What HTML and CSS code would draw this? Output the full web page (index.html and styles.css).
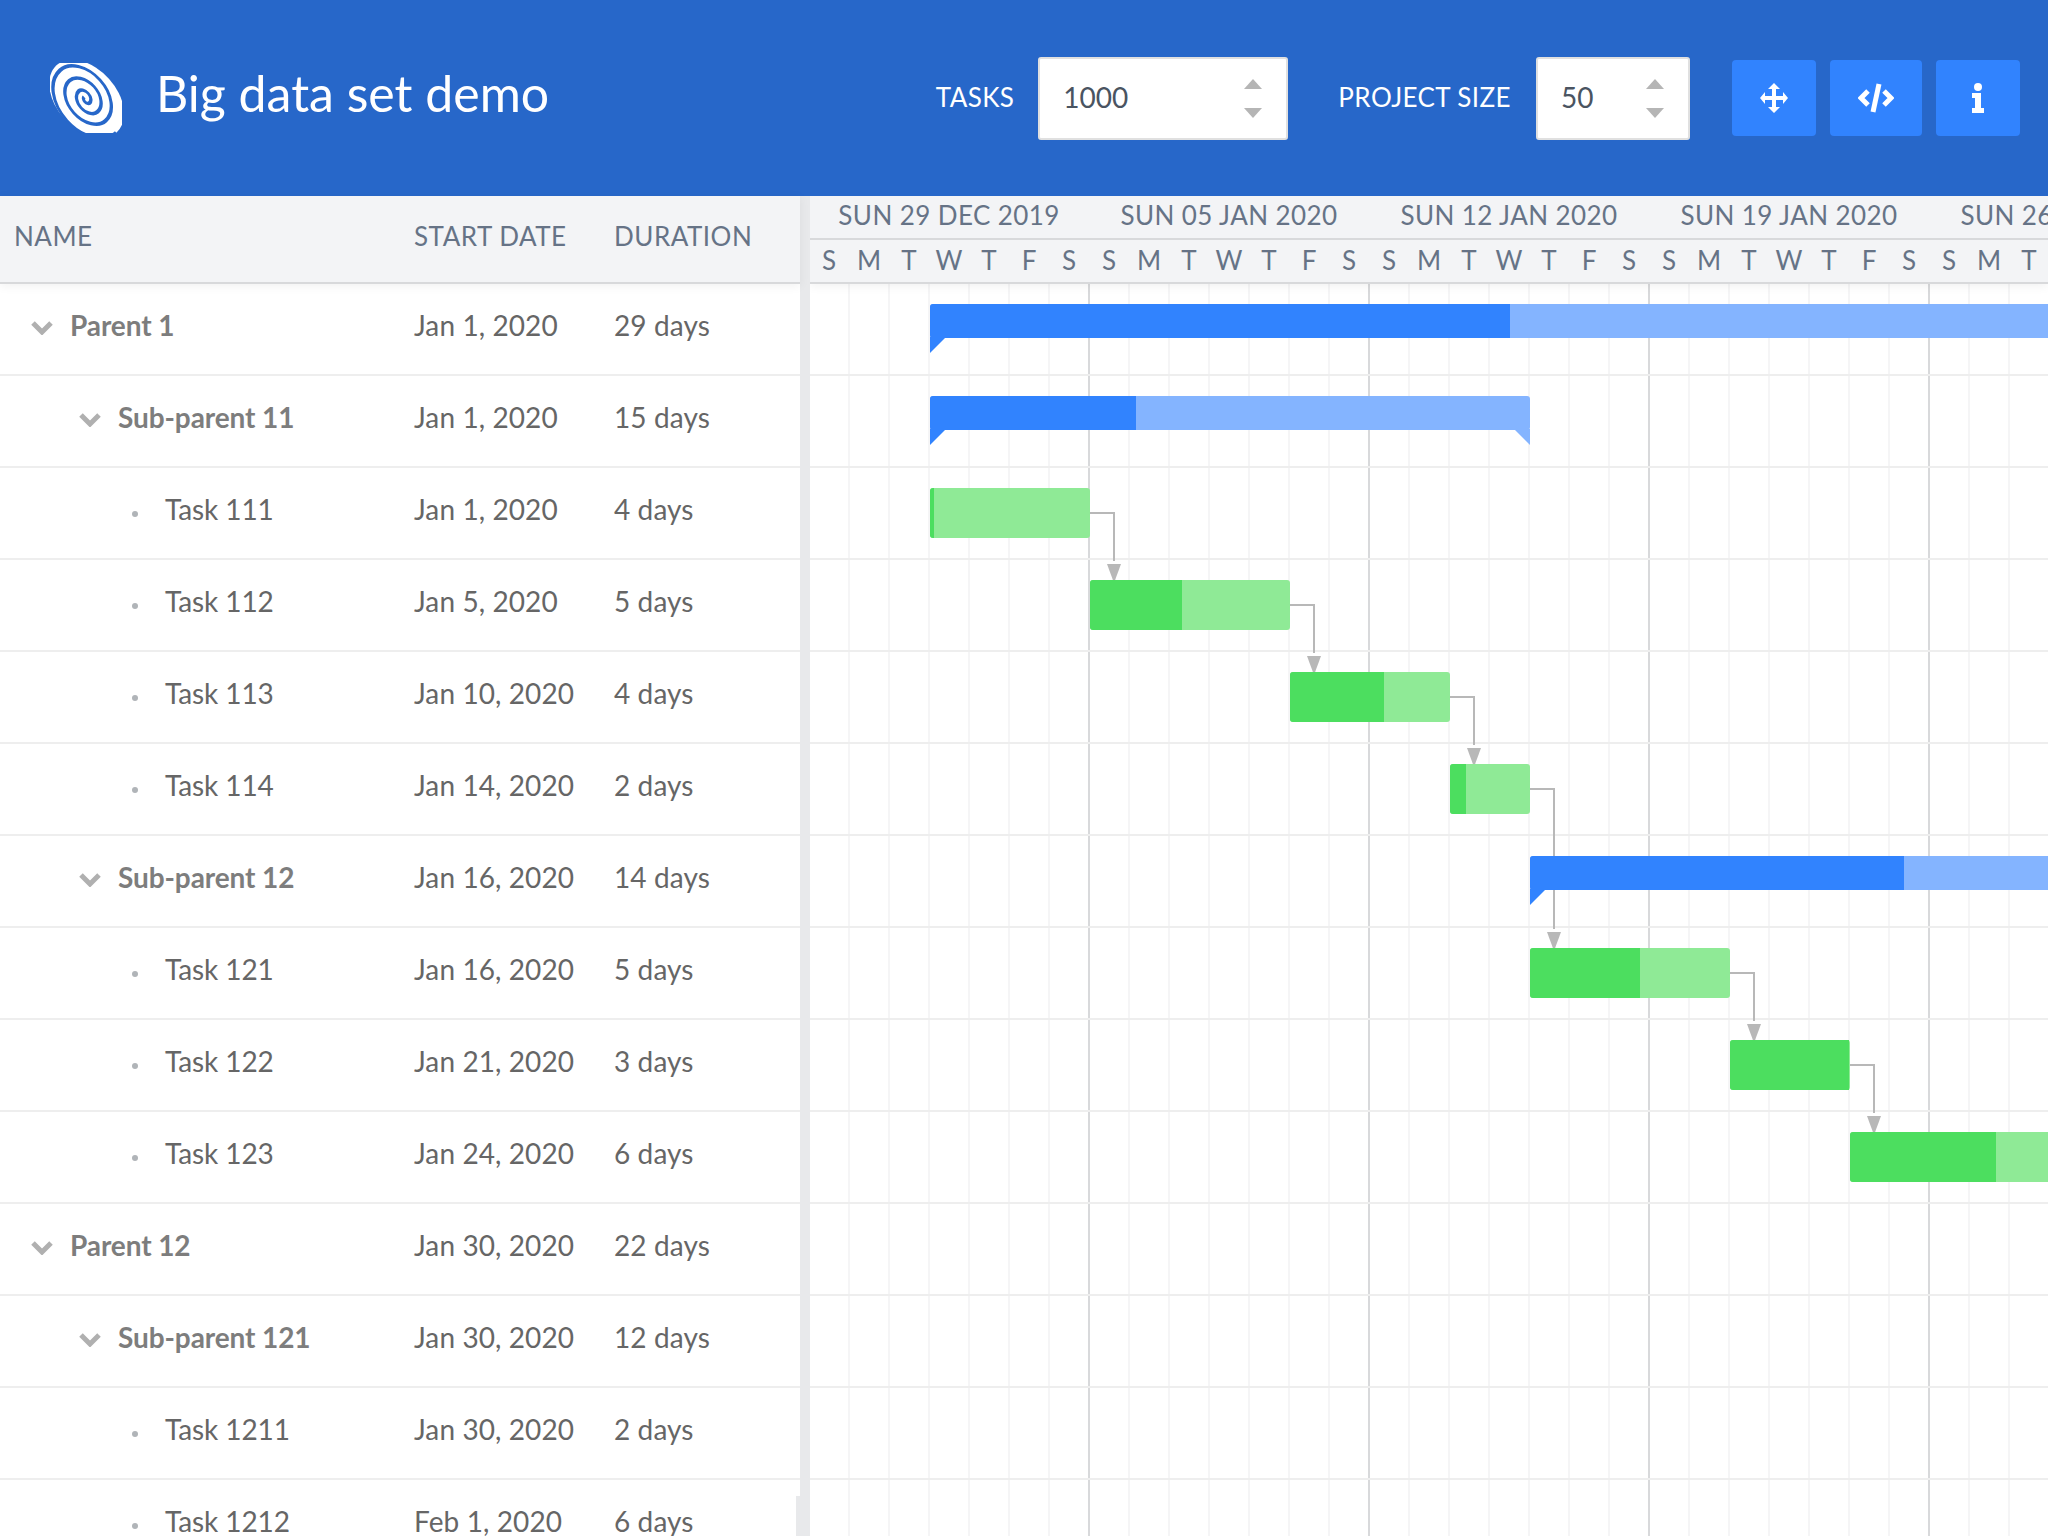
FILE: index.html
```html
<!DOCTYPE html>
<html>
  <head>
    <meta charset="utf-8" />
    <title>Big data set demo</title>
    <link rel="stylesheet" href="styles.css">
  </head>
  <body>
    <header class="topbar">
      <svg class="logo" width="72" height="70" viewBox="0 0 72 70">
        <defs>
          <linearGradient id="logofill" gradientUnits="userSpaceOnUse" x1="14" y1="8" x2="60" y2="66">
            <stop offset="0.4" stop-color="#ffffff" />
            <stop offset="1" stop-color="#acafb3" />
          </linearGradient>
        </defs>
        <g transform="translate(36 35) rotate(48) scale(1 0.68)">
          <ellipse cx="1" rx="45" ry="44" fill="url(#logofill)" />
          <path class="groove" d="M-2 1A4 4 0 0 0 6 1A8 8 0 0 0 -10 1A14 14 0 0 0 18 1A21 21 0 0 0 -24 1A27 27 0 0 0 30 1A34 34 0 0 0 -38 1A42 42 0 0 0 46 1" />
        </g>
      </svg>
      <h1 class="title">Big data set demo</h1>
      <label class="field-label">TASKS</label>
      <div class="number-field tasks-field">
        <span>1000</span>
        <div class="spin"><i class="up"></i><i class="down"></i></div>
      </div>
      <label class="field-label size-label">PROJECT SIZE</label>
      <div class="number-field size-field">
        <span>50</span>
        <div class="spin"><i class="up"></i><i class="down"></i></div>
      </div>
      <button class="tool-btn move-btn">
        <svg width="28" height="30" viewBox="0 0 28 30" fill="#fff">
          <path d="M14 0L20 6H16V13H23V9L28 15L23 21V17H16V24H20L14 30L8 24H12V17H5V21L0 15L5 9V13H12V6H8Z" />
        </svg>
      </button>
      <button class="tool-btn code-btn">
        <svg width="36" height="30" viewBox="0 0 36 30" fill="none" stroke="#fff" stroke-width="5">
          <path d="M10 8l-7 7 7 7M26 8l7 7-7 7" />
          <path d="M21 1l-6 28" />
        </svg>
      </button>
      <button class="tool-btn info-btn">
        <svg width="12" height="30" viewBox="0 0 12 30" fill="#fff">
          <circle cx="6" cy="4" r="4" />
          <path d="M0 10h9v15h3v5H0v-5h3v-10H0z" />
        </svg>
      </button>
    </header>

    <main class="gantt">
      <section class="locked">
        <div class="grid-head">
          <div class="col-name">NAME</div>
          <div class="col-date">START DATE</div>
          <div class="col-dur">DURATION</div>
        </div>
        <div class="grid-row parent"><div class="col-name"><svg class="chev" width="22" height="14" viewBox="0 0 22 14"><path d="M2 2l9 9 9-9" /></svg>Parent 1</div><div class="col-date">Jan 1, 2020</div><div class="col-dur">29 days</div></div>
        <div class="grid-row parent lvl1"><div class="col-name"><svg class="chev" width="22" height="14" viewBox="0 0 22 14"><path d="M2 2l9 9 9-9" /></svg>Sub-parent 11</div><div class="col-date">Jan 1, 2020</div><div class="col-dur">15 days</div></div>
        <div class="grid-row leaf"><div class="col-name"><i class="dot"></i>Task 111</div><div class="col-date">Jan 1, 2020</div><div class="col-dur">4 days</div></div>
        <div class="grid-row leaf"><div class="col-name"><i class="dot"></i>Task 112</div><div class="col-date">Jan 5, 2020</div><div class="col-dur">5 days</div></div>
        <div class="grid-row leaf"><div class="col-name"><i class="dot"></i>Task 113</div><div class="col-date">Jan 10, 2020</div><div class="col-dur">4 days</div></div>
        <div class="grid-row leaf"><div class="col-name"><i class="dot"></i>Task 114</div><div class="col-date">Jan 14, 2020</div><div class="col-dur">2 days</div></div>
        <div class="grid-row parent lvl1"><div class="col-name"><svg class="chev" width="22" height="14" viewBox="0 0 22 14"><path d="M2 2l9 9 9-9" /></svg>Sub-parent 12</div><div class="col-date">Jan 16, 2020</div><div class="col-dur">14 days</div></div>
        <div class="grid-row leaf"><div class="col-name"><i class="dot"></i>Task 121</div><div class="col-date">Jan 16, 2020</div><div class="col-dur">5 days</div></div>
        <div class="grid-row leaf"><div class="col-name"><i class="dot"></i>Task 122</div><div class="col-date">Jan 21, 2020</div><div class="col-dur">3 days</div></div>
        <div class="grid-row leaf"><div class="col-name"><i class="dot"></i>Task 123</div><div class="col-date">Jan 24, 2020</div><div class="col-dur">6 days</div></div>
        <div class="grid-row parent"><div class="col-name"><svg class="chev" width="22" height="14" viewBox="0 0 22 14"><path d="M2 2l9 9 9-9" /></svg>Parent 12</div><div class="col-date">Jan 30, 2020</div><div class="col-dur">22 days</div></div>
        <div class="grid-row parent lvl1"><div class="col-name"><svg class="chev" width="22" height="14" viewBox="0 0 22 14"><path d="M2 2l9 9 9-9" /></svg>Sub-parent 121</div><div class="col-date">Jan 30, 2020</div><div class="col-dur">12 days</div></div>
        <div class="grid-row leaf"><div class="col-name"><i class="dot"></i>Task 1211</div><div class="col-date">Jan 30, 2020</div><div class="col-dur">2 days</div></div>
        <div class="grid-row leaf"><div class="col-name"><i class="dot"></i>Task 1212</div><div class="col-date">Feb 1, 2020</div><div class="col-dur">6 days</div></div>
        <div class="scroll-thumb"></div>
      </section>

      <div class="splitter"></div>

      <section class="schedule">
        <div class="time-head">
          <div class="weeks">
            <div>SUN 29 DEC 2019</div>
            <div>SUN 05 JAN 2020</div>
            <div>SUN 12 JAN 2020</div>
            <div>SUN 19 JAN 2020</div>
            <div>SUN 26 JAN 2020</div>
          </div>
          <div class="days">
            <span>S</span><span>M</span><span>T</span><span>W</span><span>T</span><span>F</span><span>S</span>
            <span>S</span><span>M</span><span>T</span><span>W</span><span>T</span><span>F</span><span>S</span>
            <span>S</span><span>M</span><span>T</span><span>W</span><span>T</span><span>F</span><span>S</span>
            <span>S</span><span>M</span><span>T</span><span>W</span><span>T</span><span>F</span><span>S</span>
            <span>S</span><span>M</span><span>T</span><span>W</span><span>T</span><span>F</span><span>S</span>
          </div>
        </div>
        <div class="canvas">
          <!-- dependency lines sit under the bars -->
          <svg class="deps" width="1238" height="1252">
            <path d="M280 229h24v48M480 321h24v48M640 413h24v48M720 505h24v140M920 689h24v48M1040 781h24v48" />
            <polygon points="297,280 311,280 304,299" />
            <polygon points="497,372 511,372 504,391" />
            <polygon points="657,464 671,464 664,483" />
            <polygon points="737,648 751,648 744,667" />
            <polygon points="937,740 951,740 944,759" />
            <polygon points="1057,832 1071,832 1064,851" />
          </svg>
          <div class="time-row"><div class="bar summary" style="left: 120px; width: 1160px"><b style="width: 580px"></b></div></div>
          <div class="time-row"><div class="bar summary ends" style="left: 120px; width: 600px"><b style="width: 206px"></b></div></div>
          <div class="time-row"><div class="bar task" style="left: 120px; width: 160px"><b style="width: 4px"></b></div></div>
          <div class="time-row"><div class="bar task" style="left: 280px; width: 200px"><b style="width: 92px"></b></div></div>
          <div class="time-row"><div class="bar task" style="left: 480px; width: 160px"><b style="width: 94px"></b></div></div>
          <div class="time-row"><div class="bar task" style="left: 640px; width: 80px"><b style="width: 16px"></b></div></div>
          <div class="time-row"><div class="bar summary" style="left: 720px; width: 560px"><b style="width: 374px"></b></div></div>
          <div class="time-row"><div class="bar task" style="left: 720px; width: 200px"><b style="width: 110px"></b></div></div>
          <div class="time-row"><div class="bar task" style="left: 920px; width: 120px"><b style="width: 119px"></b></div></div>
          <div class="time-row"><div class="bar task" style="left: 1040px; width: 240px"><b style="width: 146px"></b></div></div>
          <div class="time-row"></div>
          <div class="time-row"></div>
          <div class="time-row"></div>
          <div class="time-row"></div>
        </div>
      </section>
    </main>
  </body>
</html>
```

FILE: styles.css
```css
/* Basics */
html,
body {
  margin: 0;
  padding: 0;
  height: 100%;
  overflow: hidden;
}
body {
  display: flex;
  flex-direction: column;
  background: #fff;
  color: #666;
  font-family: Lato, "Open Sans", Arial, sans-serif;
}
* {
  box-sizing: border-box;
}

/* Top bar */
.topbar {
  flex: 0 0 196px;
  display: flex;
  align-items: center;
  padding: 0 28px 0 50px;
  background: #2767c9;
}
.logo {
  flex: none;
}
.groove {
  fill: none;
  stroke: #2767c9;
  stroke-width: 4;
}
.title {
  margin: 0 auto 10px 34px;
  color: #fff;
  font-size: 50px;
  font-weight: 400;
  white-space: nowrap;
}
.field-label {
  margin: 0 24px 2px 0;
  color: #fff;
  font-size: 26px;
  letter-spacing: 0.4px;
}
.size-label {
  margin-left: 50px;
  margin-right: 25px;
}
.number-field {
  display: flex;
  align-items: center;
  justify-content: space-between;
  height: 83px;
  padding: 0 24px 3px 23px;
  background: #fff;
  border: 2px solid #e0e0e0;
  border-radius: 3px;
  color: #4a5461;
  font-size: 28px;
}
.tasks-field {
  width: 250px;
}
.size-field {
  width: 154px;
  margin-right: 42px;
}
.spin {
  display: flex;
  flex-direction: column;
  gap: 19px;
  margin-top: 3px;
}
.spin i {
  display: block;
  width: 0;
  border-left: 9px solid transparent;
  border-right: 9px solid transparent;
}
.spin .up {
  border-bottom: 10px solid #b5b5b5;
}
.spin .down {
  border-top: 10px solid #b5b5b5;
}
.tool-btn {
  display: flex;
  align-items: center;
  justify-content: center;
  height: 76px;
  padding: 0;
  background: #3183fe;
  border: 0;
  border-radius: 4px;
}
.move-btn,
.info-btn {
  width: 84px;
}
.code-btn {
  width: 92px;
  margin: 0 14px;
}

/* Layout */
.gantt {
  flex: 1;
  display: flex;
  min-height: 0;
}
.locked {
  position: relative;
  flex: 0 0 800px;
}
.splitter {
  flex: 0 0 10px;
  background: #e8e9eb;
}
.schedule {
  flex: 1;
  min-width: 0;
  overflow: hidden;
}

/* Grid */
.grid-head {
  position: relative;
  z-index: 1;
  display: flex;
  align-items: center;
  height: 88px;
  padding-bottom: 6px;
  background: #f3f4f6;
  border-bottom: 2px solid #d8d9db;
  box-shadow: 0 2px 10px rgba(0, 0, 0, 0.06);
  color: #667386;
  font-size: 26px;
  letter-spacing: 0.5px;
}
.grid-row {
  display: flex;
  align-items: center;
  height: 92px;
  padding-bottom: 8px;
  border-bottom: 2px solid #eee;
  font-size: 28px;
  letter-spacing: 0.1px;
}
.col-name {
  display: flex;
  align-items: center;
  width: 414px;
  padding-left: 14px;
}
.col-date {
  width: 200px;
}
.grid-row .col-name {
  padding-left: 31px;
  color: #7d7d7d;
  letter-spacing: -0.1px;
}
.grid-row.parent .col-name {
  font-weight: 700;
}
.grid-row.lvl1 .col-name {
  padding-left: 79px;
}
.grid-row.leaf .col-name {
  padding-left: 132px;
  color: #666;
  font-weight: 400;
}
.chev {
  flex: none;
  margin: 5px 17px 0 0;
}
.chev path {
  fill: none;
  stroke: #b0b0b0;
  stroke-width: 5;
}
.dot {
  width: 6px;
  height: 6px;
  margin: 10px 27px 0 0;
  background: #b0b4b8;
  border-radius: 50%;
}
.scroll-thumb {
  position: absolute;
  right: 0;
  top: 1300px;
  width: 4px;
  height: 60px;
  background: #e8e9eb;
}

/* Time axis */
.time-head {
  position: relative;
  z-index: 1;
  height: 88px;
  background: #f3f4f6;
  border-bottom: 2px solid #d8d9db;
  box-shadow: 0 2px 10px rgba(0, 0, 0, 0.06);
  color: #667386;
}
.weeks,
.days {
  display: flex;
  width: 1400px;
}
.weeks > div {
  flex: 0 0 280px;
  height: 44px;
  padding-right: 2px;
  border-bottom: 2px solid #d8d9db;
  font-size: 26px;
  line-height: 38px;
  letter-spacing: 0.4px;
  text-align: center;
}
.days span {
  flex: 0 0 40px;
  padding-right: 2px;
  font-size: 26px;
  line-height: 40px;
  text-align: center;
}

/* Timeline canvas */
.canvas {
  position: relative;
  width: 1400px;
  background-image:
    repeating-linear-gradient(90deg, transparent 0 278px, #d8d9db 278px 280px),
    repeating-linear-gradient(90deg, transparent 0 38px, #f5f5f6 38px 40px);
}
.time-row {
  position: relative;
  height: 92px;
  border-bottom: 2px solid #eee;
}
.deps {
  position: absolute;
  left: 0;
  top: 0;
  z-index: 1;
}
.deps path {
  fill: none;
  stroke: #b8b8b8;
  stroke-width: 2;
}
.deps polygon {
  fill: #b8b8b8;
}
.bar {
  position: absolute;
  z-index: 2;
  top: 20px;
  border-radius: 3px;
}
.bar b {
  display: block;
  height: 100%;
  border-radius: 3px 0 0 3px;
}
.bar.task {
  height: 50px;
  background: #8fea96;
}
.bar.task b {
  background: #4cde5f;
}
.bar.summary {
  height: 34px;
  background: #84b4ff;
}
.bar.summary b {
  background: #3183fe;
}
.bar.summary::before {
  content: "";
  position: absolute;
  left: 0;
  top: 33px;
  border-top: 16px solid #3183fe;
  border-right: 16px solid transparent;
}
.bar.ends::after {
  content: "";
  position: absolute;
  right: 0;
  top: 33px;
  border-top: 16px solid #84b4ff;
  border-left: 16px solid transparent;
}
```
